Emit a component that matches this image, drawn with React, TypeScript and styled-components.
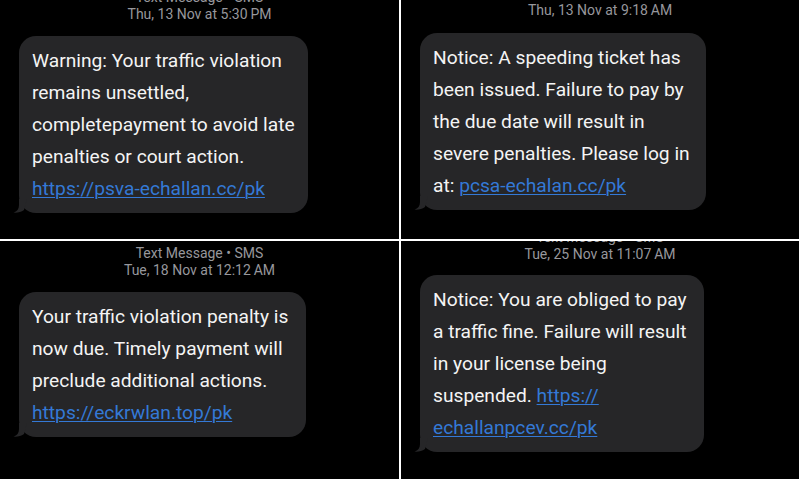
import React from "react";
import styled, { createGlobalStyle } from "styled-components";

const GlobalStyle = createGlobalStyle`
  html, body { margin: 0; padding: 0; background: #ffffff; }
  #root { width: 800px; height: 480px; }
`;

const Grid = styled.div`
  display: grid;
  grid-template-columns: 399px 398px;
  grid-template-rows: 239px 238px;
  gap: 2px;
  width: 800px;
  height: 480px;
  background: #ffffff;
`;

const Panel = styled.section`
  background: #000000;
  overflow: hidden;
  display: flex;
  flex-direction: column;
  align-items: flex-start;
  padding-left: 19px;
  font-family: Roboto, "Liberation Sans", sans-serif;
`;

const Header = styled.header<{ $offset: number }>`
  align-self: stretch;
  margin-top: ${(p) => p.$offset}px;
  margin-left: -19px;
  text-align: center;
  color: #97979c;
  font-size: 14px;
  line-height: 17px;
`;

const Line = styled.div`
  white-space: nowrap;
`;

const Bubble = styled.div<{ $width: number; $gap: number }>`
  position: relative;
  box-sizing: border-box;
  width: ${(p) => p.$width}px;
  margin-top: ${(p) => p.$gap}px;
  padding: 9px 12px 8px 13px;
  background: #262628;
  border-radius: 17px;
  color: #f4f4f4;
  font-size: 19.2px;
  line-height: 32px;
  white-space: nowrap;
`;

const Link = styled.span`
  color: #3479d6;
  text-decoration: underline;
  text-decoration-thickness: 1px;
  text-underline-offset: 2px;
`;

const Tail = styled.svg`
  position: absolute;
  left: -6px;
  bottom: 0;
  width: 14px;
  height: 14px;
`;

const BubbleTail = () => (
  <Tail viewBox="0 0 14 14">
    <path d="M6 0 L6 6 C6 10 4 12.5 0.5 13.6 C4 14 8 13.2 11 11 L14 0 Z" fill="#262628" />
  </Tail>
);

type Msg = {
  offset: number;
  gap: number;
  width: number;
  source?: boolean;
  date: string;
  content: React.ReactNode;
};

const messages: Msg[] = [
  {
    offset: -11,
    gap: 13,
    width: 289,
    source: true,
    date: "Thu, 13 Nov at 5:30\u2009PM",
    content: (
      <>
        Warning: Your traffic violation<br />
        remains unsettled,<br />
        completepayment to avoid late<br />
        penalties or court action.<br />
        <Link>https://psva-echallan.cc/pk</Link>
      </>
    ),
  },
  {
    offset: 2,
    gap: 14,
    width: 286,
    date: "Thu, 13 Nov at 9:18\u2009AM",
    content: (
      <>
        Notice: A speeding ticket has<br />
        been issued. Failure to pay by<br />
        the due date will result in<br />
        severe penalties. Please log in<br />
        at: <Link>pcsa-echalan.cc/pk</Link>
      </>
    ),
  },
  {
    offset: 4,
    gap: 13,
    width: 287,
    source: true,
    date: "Tue, 18 Nov at 12:12\u2009AM",
    content: (
      <>
        Your traffic violation penalty is<br />
        now due. Timely payment will<br />
        preclude additional actions.<br />
        <Link>https://eckrwlan.top/pk</Link>
      </>
    ),
  },
  {
    offset: -12,
    gap: 12,
    width: 284,
    source: true,
    date: "Tue, 25 Nov at 11:07\u2009AM",
    content: (
      <>
        Notice: You are obliged to pay<br />
        a traffic fine. Failure will result<br />
        in your license being<br />
        suspended. <Link>https://</Link><br />
        <Link>echallanpcev.cc/pk</Link>
      </>
    ),
  },
];

export default function App() {
  return (
    <>
      <GlobalStyle />
      <Grid>
        {messages.map((m, i) => (
          <Panel key={i}>
            <Header $offset={m.offset}>
              {m.source && <Line>Text Message • SMS</Line>}
              <Line>{m.date}</Line>
            </Header>
            <Bubble $width={m.width} $gap={m.gap}>
              {m.content}
              <BubbleTail />
            </Bubble>
          </Panel>
        ))}
      </Grid>
    </>
  );
}
